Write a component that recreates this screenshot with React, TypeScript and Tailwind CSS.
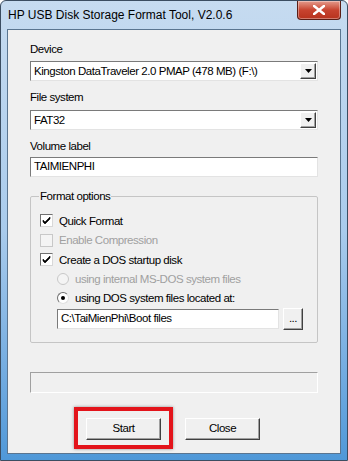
import React from "react";

const sunken =
  "border border-t-[#7a7a7a] border-l-[#7a7a7a] border-r-[#e3e3e3] border-b-[#e3e3e3] bg-white";
const raised =
  "border border-t-white border-l-white border-r-[#404040] border-b-[#404040] shadow-[inset_-1px_-1px_0_#a0a0a0] bg-[#f0f0f0]";

function ComboBox({ value }: { value: string }) {
  return (
    <div className={`flex h-[20px] items-center ${sunken}`}>
      <div className="flex-1 truncate pl-[3px] leading-[14px]">{value}</div>
      <div className={`mr-[1px] flex h-[16px] w-[16px] items-center justify-center ${raised}`}>
        <svg width="7" height="4" viewBox="0 0 7 4">
          <path d="M0 0h7L3.5 4z" fill="#000" />
        </svg>
      </div>
    </div>
  );
}

function CheckBox({ label, checked, disabled }: { label: string; checked?: boolean; disabled?: boolean }) {
  return (
    <div className="flex h-[19.5px] items-center">
      <div
        className={`flex h-[13px] w-[13px] items-center justify-center border ${
          disabled
            ? "border-[#c8c8c8] bg-[#f4f4f4]"
            : "border-t-[#707070] border-l-[#707070] border-r-[#d8d8d8] border-b-[#d8d8d8] bg-white"
        }`}
      >
        {checked && (
          <svg width="9" height="9" viewBox="0 0 9 9">
            <path d="M1 4l2 2 5-5v2l-5 5-2-2z" fill="#000" stroke="#000" strokeWidth="0.6" />
          </svg>
        )}
      </div>
      <span className={`ml-[6px] leading-[14px] ${disabled ? "text-[#a0a0a0]" : "text-black"}`}>{label}</span>
    </div>
  );
}

function Radio({ label, checked, disabled }: { label: string; checked?: boolean; disabled?: boolean }) {
  return (
    <div className="flex h-[19px] items-center">
      <div
        className={`flex h-[12px] w-[12px] items-center justify-center rounded-full border ${
          disabled ? "border-[#c8c8c8] bg-[#f4f4f4]" : "border-t-[#707070] border-l-[#707070] border-r-[#e0e0e0] border-b-[#e0e0e0] bg-white"
        }`}
      >
        {checked && <div className="h-[4px] w-[4px] rounded-full bg-black" />}
      </div>
      <span className={`ml-[6px] leading-[14px] ${disabled ? "text-[#a0a0a0]" : "text-black"}`}>{label}</span>
    </div>
  );
}

export default function App() {
  return (
    <div className="flex h-[461px] w-[348px] flex-col rounded-t-[6px] border border-[#3b4d61] bg-gradient-to-b from-[#c6dbf0] via-[#a9cbec] to-[#4f98d8] text-black">
      {/* title bar */}
      <div className="flex h-[28px] shrink-0 items-start">
        <div
          className="pl-[7px] pt-[6px] text-[12px] leading-[16px] text-black"
          style={{ fontFamily: '"Liberation Sans", Arial, sans-serif' }}
        >
          HP USB Disk Storage Format Tool, V2.0.6
        </div>
        <div className="flex-1" />
        <div className="mr-[6px] flex h-[19px] w-[44px] items-center justify-center rounded-b-[4px] border border-t-0 border-[#5a1e16] bg-gradient-to-b from-[#e39a8c] via-[#c7432f] to-[#b7321d] shadow-[inset_0_0_0_1px_rgba(255,255,255,0.35)]">
          <svg width="12" height="10" viewBox="0 0 12 10">
            <path d="M1 1l10 8M11 1L1 9" stroke="#fff" strokeWidth="2.6" strokeLinecap="square" />
          </svg>
        </div>
      </div>

      {/* client area */}
      <div
        className="mx-[6px] mb-[6px] flex flex-1 flex-col border border-[#5a7590] bg-[#f0f0f0] px-[22px] text-[11.5px] tracking-[-0.45px]"
        style={{ fontFamily: '"Liberation Sans", Arial, sans-serif' }}
      >
        <div className="mt-[12px] leading-[14px]">Device</div>
        <div className="mt-[5px]">
          <ComboBox value="Kingston DataTraveler 2.0 PMAP (478 MB) (F:\)" />
        </div>
        <div className="mt-[9px] leading-[14px]">File system</div>
        <div className="mt-[6px]">
          <ComboBox value="FAT32" />
        </div>
        <div className="mt-[9px] leading-[14px]">Volume label</div>
        <div className={`mt-[4px] flex h-[20px] items-center pl-[3px] ${sunken}`}>TAIMIENPHI</div>

        <fieldset className="mt-[12px] h-[154px] rounded-[2px] border border-[#c5c5c5] px-[9px] pt-[8px]">
          <legend className="ml-[-1px] px-[1px] leading-[14px]">Format options</legend>
          <CheckBox label="Quick Format" checked />
          <CheckBox label="Enable Compression" disabled />
          <CheckBox label="Create a DOS startup disk" checked />
          <div className="pl-[17px]">
            <Radio label="using internal MS-DOS system files" disabled />
            <Radio label="using DOS system files located at:" checked />
            <div className="flex items-center">
              <div className={`flex h-[20px] w-[222px] items-center pl-[3px] ${sunken}`}>C:\TaiMienPhi\Boot files</div>
              <div className={`ml-[4px] flex h-[22px] w-[20px] items-center justify-center ${raised}`}>...</div>
            </div>
          </div>
        </fieldset>

        <div className="mt-[29px] h-[21px] border border-t-[#a0a0a0] border-l-[#a0a0a0] border-r-white border-b-white" />

        <div className="mt-[25px] flex items-start pl-[56px]">
          <div className="-ml-[12px] -mt-[11px] border-[4px] border-[#e3141b] px-[8px] pb-[5px] pt-[7px] shadow-[0_0_3px_rgba(0,0,0,0.4)]">
            <div className={`flex h-[22px] w-[75px] items-center justify-center ${raised}`}>Start</div>
          </div>
          <div className={`ml-[12px] flex h-[22px] w-[75px] items-center justify-center ${raised}`}>Close</div>
        </div>
      </div>
    </div>
  );
}
